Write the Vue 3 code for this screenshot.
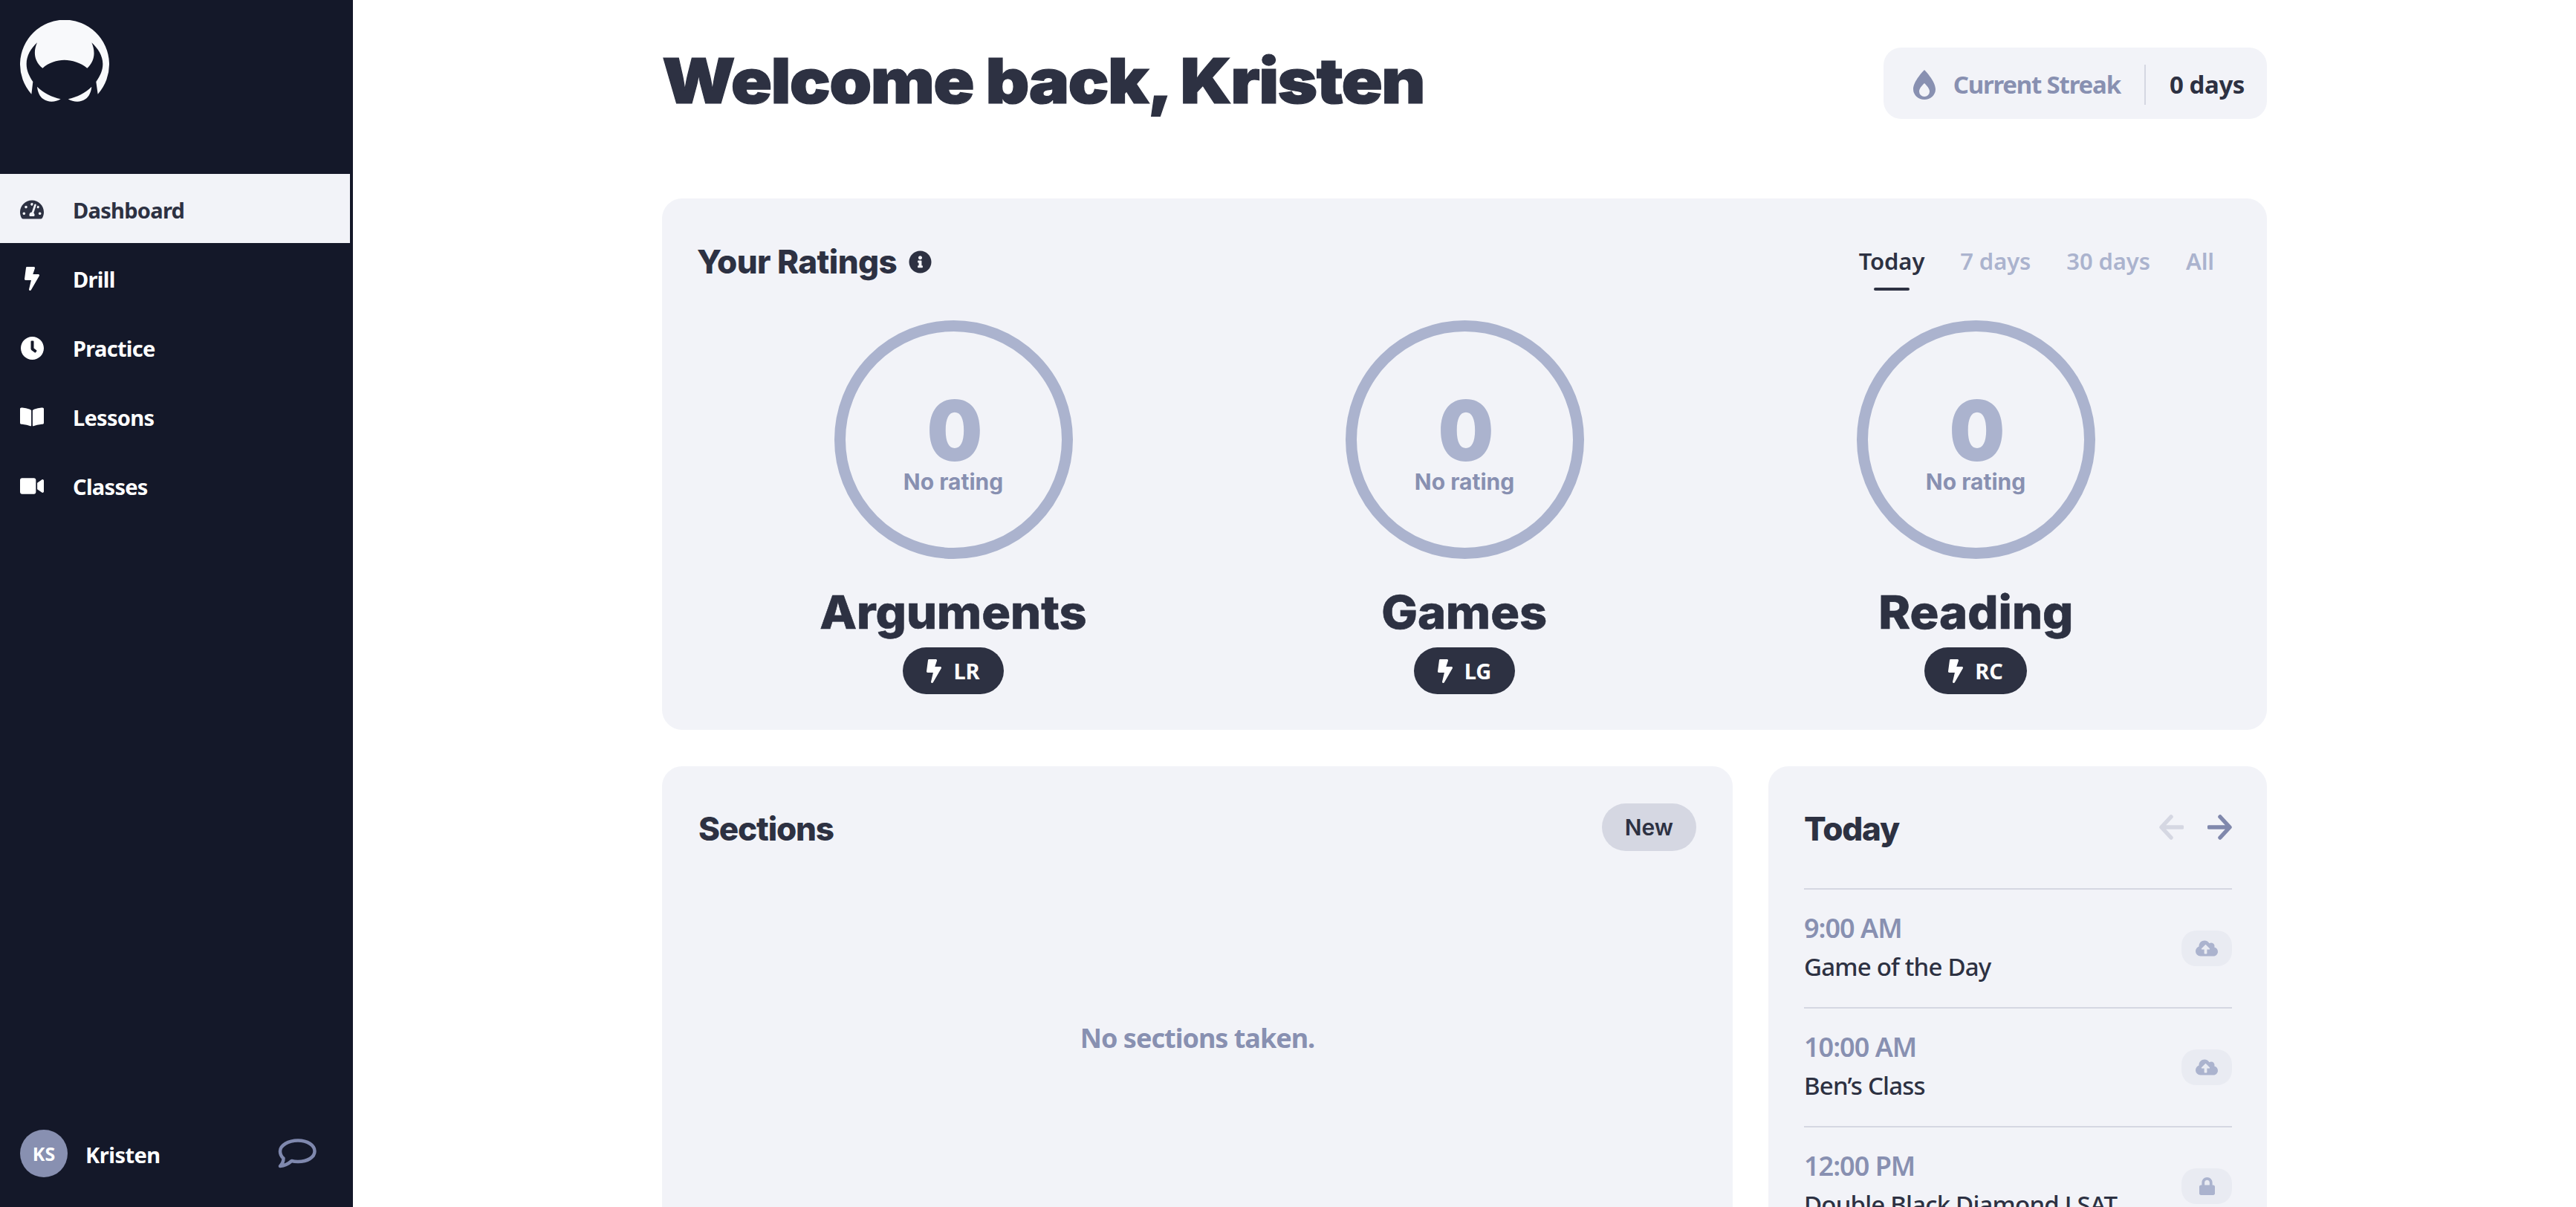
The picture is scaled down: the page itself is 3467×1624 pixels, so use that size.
<template>
  <div class="app">
    <aside class="sidebar">
      <div class="logo-wrap">
        <svg class="logo" viewBox="81 81 360 330" fill="#f8f9fb">
          <path d="M127 380A180 180 0 1 1 395 380L388 330C405 305 415 285 415 258C415 225 395 195 370 172C385 205 385 245 352 275C325 252 290 242 260 242C230 242 197 252 172 275C135 245 135 205 150 172C125 195 107 225 107 258C107 285 117 305 133 330Z" />
          <path d="M150 350C175 375 210 392 245 400C225 412 195 415 175 400C160 390 152 370 150 350Z" />
          <path d="M370 350C345 375 310 392 275 400C295 412 325 415 345 400C360 390 368 370 370 350Z" />
        </svg>
      </div>
      <nav class="nav">
        <a v-for="item in navItems" :key="item.label" class="nav-item" :class="{ active: item.active }">
          <span class="nav-icon">
            <svg :viewBox="item.box" :width="item.w" :height="item.h" fill="currentColor"><path :d="item.d" /></svg>
          </span>
          {{ item.label }}
        </a>
      </nav>
      <div class="user">
        <div class="avatar">KS</div>
        <span class="user-name">Kristen</span>
        <svg class="chat" viewBox="0 0 52 40" width="52" height="40" fill="none" stroke="#7f88ae" stroke-width="4.5" stroke-linejoin="round">
          <path d="M27 2.5C40 2.5 49.5 9 49.5 17C49.5 25 40 31 27 31C24 31 21 30.7 18.5 30C14 34 8 36.5 3 37C5.5 34.5 7.5 31 7.5 26.5C4.5 24 3 20.5 3 17C3 9 14 2.5 27 2.5Z" />
        </svg>
      </div>
    </aside>

    <main class="main">
      <div class="content">
        <header class="header">
          <h1 class="welcome">Welcome back, Kristen</h1>
          <div class="streak">
            <svg viewBox="0 0 30 40" width="30" height="40" fill="#8890b1" fill-rule="evenodd">
              <path d="M15 0C15 0 30 15 30 26A15 14 0 0 1 0 26C0 15 15 0 15 0ZM15 18C15 18 8 24 8 29A7 7 0 0 0 22 29C22 24 15 18 15 18Z" />
            </svg>
            <span class="streak-label">Current Streak</span>
            <span class="streak-value">0 days</span>
          </div>
        </header>

        <section class="card ratings">
          <div class="ratings-head">
            <div class="ratings-title">
              <h2>Your Ratings</h2>
              <svg viewBox="0 0 512 512" width="31" height="31" fill="#2d3142"><path :d="icons.info" /></svg>
            </div>
            <div class="tabs">
              <span v-for="tab in tabs" :key="tab" class="tab" :class="{ active: tab === 'Today' }">{{ tab }}</span>
            </div>
          </div>
          <div class="ratings-grid">
            <div v-for="r in ratings" :key="r.name" class="rating">
              <div class="ring">
                <span class="ring-value">0</span>
                <span class="ring-label">No rating</span>
              </div>
              <div class="rating-name">{{ r.name }}</div>
              <div class="rating-pill">
                <svg viewBox="0 0 320 512" width="20" height="32" fill="#fff"><path :d="icons.bolt" /></svg>
                {{ r.code }}
              </div>
            </div>
          </div>
        </section>

        <div class="lower">
          <section class="card sections">
            <div class="sections-head">
              <h2>Sections</h2>
              <span class="new-btn">New</span>
            </div>
            <p class="empty">No sections taken.</p>
          </section>

          <section class="card today">
            <div class="today-head">
              <h2>Today</h2>
              <div class="arrows">
                <svg viewBox="0 0 33 34" width="33" height="34" fill="none" stroke="#d5d7e2" stroke-width="5.5" stroke-linecap="round" stroke-linejoin="round">
                  <path d="M31 17H4M16 3L3 17L16 31" />
                </svg>
                <svg viewBox="0 0 33 34" width="33" height="34" fill="none" stroke="#8088ac" stroke-width="5.5" stroke-linecap="round" stroke-linejoin="round">
                  <path d="M2 17H29M17 3L30 17L17 31" />
                </svg>
              </div>
            </div>
            <div v-for="ev in events" :key="ev.time" class="event">
              <div class="event-text">
                <div class="event-time">{{ ev.time }}</div>
                <div class="event-name">{{ ev.name }}</div>
              </div>
              <span class="event-btn">
                <svg v-if="ev.locked" viewBox="0 0 448 512" width="21" height="24" fill="#abb3ce"><path :d="icons.lock" /></svg>
                <svg v-else viewBox="0 0 640 512" width="30" height="24" fill="#abb3ce"><path :d="icons.cloud" /></svg>
              </span>
            </div>
          </section>
        </div>
      </div>
    </main>
  </div>
</template>

<script setup>
const icons = {
  bolt: 'M296 160H180.6l42.6-129.8C227.2 15 215.7 0 200 0H56C44 0 33.8 8.9 32.2 20.8l-32 240C-2.7 275.2 8.5 288 24 288h118.7L96.6 482.5c-3.6 15.2 8 29.5 23.3 29.5 8.4 0 16.4-4.4 20.8-12l176-304c9.3-15.9-2.2-36-20.7-36z',
  info: 'M256 8C119.043 8 8 119.083 8 256c0 136.997 111.043 248 248 248s248-111.003 248-248C504 119.083 392.957 8 256 8zm0 110c23.196 0 42 18.804 42 42s-18.804 42-42 42-42-18.804-42-42 18.804-42 42-42zm56 254c0 6.627-5.373 12-12 12h-88c-6.627 0-12-5.373-12-12v-24c0-6.627 5.373-12 12-12h12v-64h-12c-6.627 0-12-5.373-12-12v-24c0-6.627 5.373-12 12-12h64c6.627 0 12 5.373 12 12v100h12c6.627 0 12 5.373 12 12v24z',
  lock: 'M400 224h-24v-72C376 68.2 307.8 0 224 0S72 68.2 72 152v72H48c-26.5 0-48 21.5-48 48v192c0 26.5 21.5 48 48 48h352c26.5 0 48-21.5 48-48V272c0-26.5-21.5-48-48-48zm-104 0H152v-72c0-39.7 32.3-72 72-72s72 32.3 72 72v72z',
  cloud: 'M537.6 226.6c4.1-10.7 6.4-22.4 6.4-34.6 0-53-43-96-96-96-19.7 0-38.1 6-53.3 16.2C367 64.2 315.3 32 256 32c-88.4 0-160 71.6-160 160 0 2.7.1 5.4.2 8.1C40.2 219.8 0 273.2 0 336c0 79.5 64.5 144 144 144h368c70.7 0 128-57.3 128-128 0-61.9-44-113.6-102.4-125.4zM393.4 288H328v112c0 8.8-7.2 16-16 16h-48c-8.8 0-16-7.2-16-16V288h-65.4c-14.3 0-21.4-17.2-11.3-27.3l105.4-105.4c6.2-6.2 16.4-6.2 22.6 0l105.4 105.4c10.1 10.1 2.9 27.3-11.3 27.3z'
}

const navItems = [
  {
    label: 'Dashboard',
    active: true,
    box: '0 32 576 448',
    w: 32,
    h: 26,
    d: 'M288 32C128.94 32 0 160.94 0 320c0 52.8 14.25 102.26 39.06 144.8 5.61 9.62 16.3 15.2 27.44 15.2h443c11.14 0 21.83-5.58 27.44-15.2C561.75 422.26 576 372.8 576 320c0-159.06-128.94-288-288-288zm0 64c14.71 0 26.58 10.13 30.32 23.65-1.11 2.26-2.64 4.23-3.45 6.67l-9.22 27.67c-5.13 3.49-10.97 6.01-17.64 6.01-17.67 0-32-14.33-32-32S270.33 96 288 96zM96 384c-17.67 0-32-14.33-32-32s14.33-32 32-32 32 14.33 32 32-14.33 32-32 32zm48-160c-17.67 0-32-14.33-32-32s14.33-32 32-32 32 14.33 32 32-14.33 32-32 32zm246.77-72.41l-61.33 184C343.13 347.33 352 364.54 352 384c0 11.72-3.38 22.55-8.88 32H232.88c-5.5-9.45-8.88-20.28-8.88-32 0-33.94 26.5-61.43 59.9-63.59l61.34-184.01c4.17-12.56 17.73-19.45 30.36-15.17 12.57 4.19 19.35 17.79 15.17 30.36zm14.66 57.2l15.52-46.55c3.47-1.29 7.13-2.23 11.05-2.23 17.67 0 32 14.33 32 32s-14.33 32-32 32c-11.38-.01-20.89-6.28-26.57-15.22zM480 384c-17.67 0-32-14.33-32-32s14.33-32 32-32 32 14.33 32 32-14.33 32-32 32z'
  },
  { label: 'Drill', box: '0 0 320 512', w: 20, h: 32, d: icons.bolt },
  {
    label: 'Practice',
    box: '8 8 496 496',
    w: 31,
    h: 31,
    d: 'M256,8C119,8,8,119,8,256S119,504,256,504,504,393,504,256,393,8,256,8Zm92.49,313h0l-20,25a16,16,0,0,1-22.49,2.5h0l-67-49.72a40,40,0,0,1-15-31.23V112a16,16,0,0,1,16-16h32a16,16,0,0,1,16,16V256l58,42.5A16,16,0,0,1,348.49,321Z'
  },
  {
    label: 'Lessons',
    box: '0 32 576 448',
    w: 32,
    h: 26,
    d: 'M542.22 32.05c-54.8 3.11-163.72 14.43-230.96 55.59-4.64 2.84-7.27 7.89-7.27 13.17v363.87c0 11.55 12.63 18.85 23.28 13.49 69.18-34.82 169.23-44.32 218.7-46.92 16.89-.89 30.02-14.43 30.02-30.66V62.75c.01-17.71-15.35-31.74-33.77-30.7zM264.73 87.64C197.5 46.48 88.58 35.17 33.78 32.05 15.36 31.01 0 45.04 0 62.75V400.6c0 16.24 13.13 29.78 30.02 30.66 49.49 2.6 149.59 12.11 218.77 46.95 10.62 5.35 23.21-1.94 23.21-13.46V100.63c0-5.29-2.62-10.14-7.27-12.99z'
  },
  {
    label: 'Classes',
    box: '0 64 576 384',
    w: 32,
    h: 22,
    d: 'M336.2 64H47.8C21.4 64 0 85.4 0 111.8v288.4C0 426.6 21.4 448 47.8 448h288.4c26.4 0 47.8-21.4 47.8-47.8V111.8c0-26.4-21.4-47.8-47.8-47.8zm189.4 37.7L416 177.3v157.4l109.6 75.5c21.2 14.6 50.4-.3 50.4-25.8V127.5c0-25.4-29.1-40.4-50.4-25.8z'
  }
]

const tabs = ['Today', '7 days', '30 days', 'All']

const ratings = [
  { name: 'Arguments', code: 'LR' },
  { name: 'Games', code: 'LG' },
  { name: 'Reading', code: 'RC' }
]

const events = [
  { time: '9:00 AM', name: 'Game of the Day' },
  { time: '10:00 AM', name: 'Ben’s Class' },
  { time: '12:00 PM', name: 'Double Black Diamond LSAT', locked: true }
]
</script>

<style scoped>
.app {
  display: flex;
  height: 1624px;
  overflow: hidden;
  font-family: "Noto Sans", sans-serif;
  color: #2d3142;
  background: #fff;
}

.sidebar {
  flex: 0 0 475px;
  display: flex;
  flex-direction: column;
  background: #141829;
  color: #fff;
}

.logo-wrap {
  height: 234px;
  padding: 27px 0 0 27px;
  box-sizing: border-box;
}

.logo {
  display: block;
  width: 120px;
  height: 110px;
}

.nav {
  display: flex;
  flex-direction: column;
}

.nav-item {
  display: flex;
  align-items: center;
  height: 93px;
  box-sizing: border-box;
  margin-right: 4px;
  padding: 3px 0 0 27px;
  font-size: 29px;
  font-weight: 700;
  letter-spacing: -0.7px;
}

.nav-item.active {
  background: #f2f3f8;
  color: #2d3142;
}

.nav-icon {
  display: flex;
  justify-content: center;
  width: 32px;
  margin-right: 39px;
}

.user {
  display: flex;
  align-items: center;
  height: 144px;
  margin-top: auto;
  padding: 0 49px 0 27px;
}

.avatar {
  display: flex;
  align-items: center;
  justify-content: center;
  width: 64px;
  height: 64px;
  border-radius: 50%;
  background: #8890b1;
  font-size: 25px;
  font-weight: 700;
}

.user-name {
  margin-left: 24px;
  padding-top: 2px;
  font-size: 29px;
  font-weight: 700;
  letter-spacing: -0.5px;
}

.chat {
  margin-left: auto;
}

.main {
  flex: 1;
  min-width: 0;
}

.content {
  width: 2160px;
  margin: 0 auto;
  padding-top: 64px;
}

.header {
  display: flex;
  align-items: center;
  justify-content: space-between;
  height: 96px;
  margin-bottom: 107px;
}

.welcome {
  margin: -6px 0 0;
  font-family: Inter, sans-serif;
  font-size: 84px;
  font-weight: 900;
  letter-spacing: -1.5px;
  line-height: 1.1;
  -webkit-text-stroke: 1.2px #2d3142;
  transform: scaleX(1.087);
  transform-origin: left center;
}

.streak {
  display: flex;
  align-items: center;
  height: 96px;
  box-sizing: border-box;
  padding: 3px 30px 0 40px;
  border-radius: 24px;
  background: #f2f3f8;
  font-size: 33px;
  font-weight: 700;
  letter-spacing: -1.2px;
}

.streak-label {
  margin-left: 24px;
  padding-right: 32px;
  color: #8890b1;
  border-right: 2px solid #d5d7e2;
  line-height: 54px;
}

.streak-value {
  margin-left: 32px;
  letter-spacing: -0.4px;
}

.card {
  border-radius: 27px;
  background: #f2f3f8;
  box-sizing: border-box;
}

.ratings {
  height: 715px;
  padding: 0 49px;
}

.ratings-head {
  display: flex;
  align-items: flex-start;
  justify-content: space-between;
  height: 164px;
  padding-top: 58px;
  box-sizing: border-box;
}

.ratings-title {
  display: flex;
  align-items: center;
  gap: 16px;
  height: 54px;
}

.ratings-title h2,
.sections-head h2,
.today-head h2 {
  margin: 0;
  font-family: Inter, sans-serif;
  font-size: 44px;
  font-weight: 800;
  letter-spacing: -1.2px;
}

.ratings-title h2 {
  margin-left: -2px;
  letter-spacing: -0.6px;
}

.sections-head h2,
.today-head h2 {
  padding-top: 4px;
}

.tabs {
  display: flex;
  gap: 48px;
  margin-right: 22px;
  margin-top: 5px;
}

.tab {
  position: relative;
  font-size: 31px;
  font-weight: 600;
  letter-spacing: -0.1px;
  color: #abb3ce;
}

.tab.active {
  color: #2d3142;
}

.tab.active::after {
  content: "";
  position: absolute;
  left: 50%;
  bottom: -19px;
  width: 48px;
  height: 4px;
  margin-left: -24px;
  border-radius: 2px;
  background: #2d3142;
}

.ratings-grid {
  display: grid;
  grid-template-columns: repeat(3, 688px);
  margin-left: -1px;
}

.rating {
  display: flex;
  flex-direction: column;
  align-items: center;
}

.ring {
  display: flex;
  flex-direction: column;
  align-items: center;
  justify-content: center;
  width: 321px;
  height: 321px;
  box-sizing: border-box;
  padding-top: 17px;
  border: 15px solid #abb3ce;
  border-radius: 50%;
}

.ring-value {
  font-family: Inter, sans-serif;
  font-size: 112px;
  font-weight: 900;
  line-height: 90px;
  color: #abb3ce;
  transform: translateX(2px) scaleX(0.94);
}

.ring-label {
  margin-top: 6px;
  font-family: Inter, sans-serif;
  font-size: 30px;
  font-weight: 700;
  line-height: 36px;
  color: #8890b1;
}

.rating-name {
  margin-top: 32px;
  font-family: Inter, sans-serif;
  font-size: 62px;
  font-weight: 800;
  line-height: 80px;
  -webkit-text-stroke: 0.6px #2d3142;
  transform: scaleX(1.045);
}

.rating-pill {
  display: flex;
  align-items: center;
  gap: 16px;
  height: 63px;
  margin-top: 7px;
  padding: 0 32px;
  border-radius: 32px;
  background: #2d3142;
  color: #fff;
  font-size: 29px;
  font-weight: 700;
}

.lower {
  display: flex;
  gap: 48px;
  margin-top: 49px;
}

.sections {
  position: relative;
  flex: 1;
  height: 900px;
  padding: 50px 49px;
}

.sections-head {
  display: flex;
  align-items: center;
  justify-content: space-between;
}

.new-btn {
  display: flex;
  align-items: center;
  height: 64px;
  padding: 0 31px;
  border-radius: 32px;
  background: #d5d7e2;
  font-family: Inter, sans-serif;
  font-size: 30px;
  font-weight: 600;
}

.empty {
  margin: 0;
  padding-top: 227px;
  text-align: center;
  font-size: 36px;
  font-weight: 700;
  letter-spacing: -1px;
  color: #8890b1;
}

.today {
  flex: 0 0 671px;
  height: 900px;
  padding: 0 47px 0 48px;
}

.today-head {
  display: flex;
  align-items: center;
  justify-content: space-between;
  height: 164px;
}

.arrows {
  display: flex;
  gap: 32px;
}

.event {
  display: flex;
  align-items: center;
  justify-content: space-between;
  height: 160px;
  box-sizing: border-box;
  border-top: 2px solid #d5d7e2;
}

.event-time {
  margin-top: -3px;
  font-size: 36px;
  font-weight: 600;
  letter-spacing: -1px;
  color: #8890b1;
  line-height: 48px;
}

.event-name {
  margin-top: 4px;
  font-size: 33px;
  font-weight: 500;
  letter-spacing: -0.8px;
  line-height: 48px;
}

.event-btn {
  display: flex;
  align-items: center;
  justify-content: center;
  width: 68px;
  height: 48px;
  border-radius: 20px;
  background: #e9ebf2;
}
</style>

<style>
body {
  overflow: hidden;
}
</style>
